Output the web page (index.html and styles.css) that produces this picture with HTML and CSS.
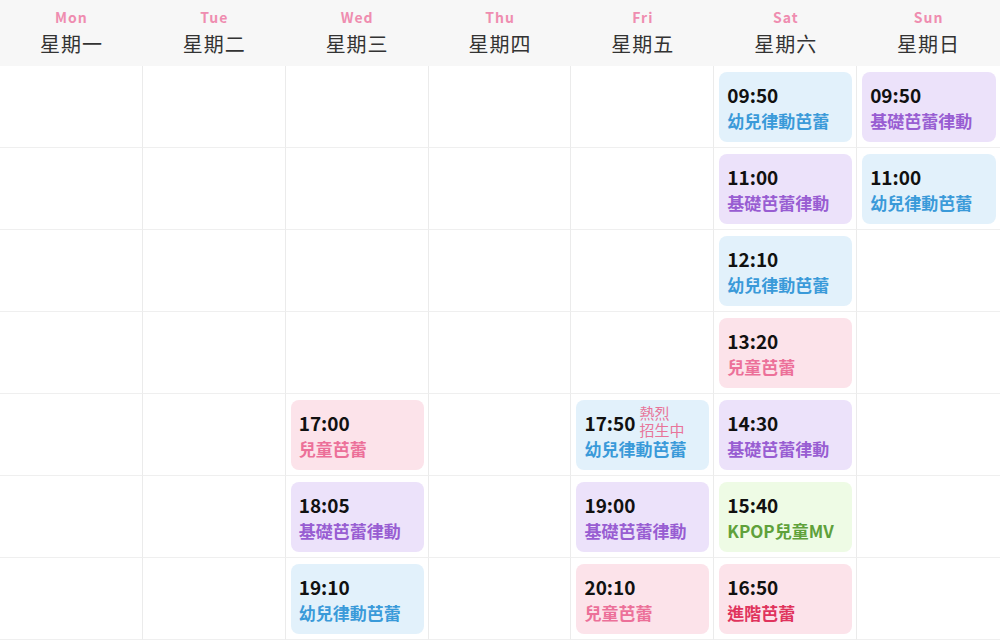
FILE: index.html
```html
<!DOCTYPE html>
<html>
<head>
    <title>課程表</title>
    <link rel="stylesheet" href="styles.css">
</head>
<body>
    <div class="timetable">
        <div class="week-head">
            <div class="day"><span class="day-en">Mon</span><span class="day-zh">星期一</span></div>
            <div class="day"><span class="day-en">Tue</span><span class="day-zh">星期二</span></div>
            <div class="day"><span class="day-en">Wed</span><span class="day-zh">星期三</span></div>
            <div class="day"><span class="day-en">Thu</span><span class="day-zh">星期四</span></div>
            <div class="day"><span class="day-en">Fri</span><span class="day-zh">星期五</span></div>
            <div class="day"><span class="day-en">Sat</span><span class="day-zh">星期六</span></div>
            <div class="day"><span class="day-en">Sun</span><span class="day-zh">星期日</span></div>
        </div>

        <div class="grid">
            <!-- row 1 -->
            <div class="cell"></div>
            <div class="cell"></div>
            <div class="cell"></div>
            <div class="cell"></div>
            <div class="cell"></div>
            <div class="cell"><div class="lesson blue"><div class="time">09:50</div><div class="name">幼兒律動芭蕾</div></div></div>
            <div class="cell"><div class="lesson purple"><div class="time">09:50</div><div class="name">基礎芭蕾律動</div></div></div>

            <!-- row 2 -->
            <div class="cell"></div>
            <div class="cell"></div>
            <div class="cell"></div>
            <div class="cell"></div>
            <div class="cell"></div>
            <div class="cell"><div class="lesson purple"><div class="time">11:00</div><div class="name">基礎芭蕾律動</div></div></div>
            <div class="cell"><div class="lesson blue"><div class="time">11:00</div><div class="name">幼兒律動芭蕾</div></div></div>

            <!-- row 3 -->
            <div class="cell"></div>
            <div class="cell"></div>
            <div class="cell"></div>
            <div class="cell"></div>
            <div class="cell"></div>
            <div class="cell"><div class="lesson blue"><div class="time">12:10</div><div class="name">幼兒律動芭蕾</div></div></div>
            <div class="cell"></div>

            <!-- row 4 -->
            <div class="cell"></div>
            <div class="cell"></div>
            <div class="cell"></div>
            <div class="cell"></div>
            <div class="cell"></div>
            <div class="cell"><div class="lesson pink"><div class="time">13:20</div><div class="name">兒童芭蕾</div></div></div>
            <div class="cell"></div>

            <!-- row 5 -->
            <div class="cell"></div>
            <div class="cell"></div>
            <div class="cell"><div class="lesson pink"><div class="time">17:00</div><div class="name">兒童芭蕾</div></div></div>
            <div class="cell"></div>
            <div class="cell"><div class="lesson blue"><div class="time">17:50<span class="hot"><span class="hot-line">熱烈</span><span class="hot-line">招生中</span></span></div><div class="name">幼兒律動芭蕾</div></div></div>
            <div class="cell"><div class="lesson purple"><div class="time">14:30</div><div class="name">基礎芭蕾律動</div></div></div>
            <div class="cell"></div>

            <!-- row 6 -->
            <div class="cell"></div>
            <div class="cell"></div>
            <div class="cell"><div class="lesson purple"><div class="time">18:05</div><div class="name">基礎芭蕾律動</div></div></div>
            <div class="cell"></div>
            <div class="cell"><div class="lesson purple"><div class="time">19:00</div><div class="name">基礎芭蕾律動</div></div></div>
            <div class="cell"><div class="lesson green"><div class="time">15:40</div><div class="name">KPOP兒童MV</div></div></div>
            <div class="cell"></div>

            <!-- row 7 -->
            <div class="cell"></div>
            <div class="cell"></div>
            <div class="cell"><div class="lesson blue"><div class="time">19:10</div><div class="name">幼兒律動芭蕾</div></div></div>
            <div class="cell"></div>
            <div class="cell"><div class="lesson pink"><div class="time">20:10</div><div class="name">兒童芭蕾</div></div></div>
            <div class="cell"><div class="lesson red"><div class="time">16:50</div><div class="name">進階芭蕾</div></div></div>
            <div class="cell"></div>
        </div>
    </div>
</body>
</html>
```

FILE: styles.css
```css
body {
    margin: 0;
    font-family: "Noto Sans CJK TC", "Noto Sans", sans-serif;
    background-color: #fff;
    color: #222;
}

.timetable {
    width: 1000px;
    height: 640px;
    overflow: hidden;
}

.week-head {
    display: grid;
    grid-template-columns: repeat(7, 1fr);
    height: 66px;
    background-color: #f7f7f7;
}

.day {
    display: flex;
    flex-direction: column;
    align-items: center;
    padding-top: 7px;
}

.day-en {
    font-size: 14px;
    font-weight: 700;
    line-height: 20px;
    letter-spacing: 1px;
    color: #ef8db0;
}

.day-zh {
    font-size: 20px;
    line-height: 33px;
    letter-spacing: 1px;
    color: #333;
}

.grid {
    display: grid;
    grid-template-columns: repeat(7, 1fr);
    grid-auto-rows: 82px;
}

.cell {
    padding: 6px 4px 5px 5px;
    border-right: 1px solid #ebebeb;
    border-bottom: 1px solid #efefef;
}

.cell:nth-child(7n) {
    border-right: none;
}

.lesson {
    height: 70px;
    box-sizing: border-box;
    padding: 9px 8px 0;
    border-radius: 8px;
}

.time {
    display: flex;
    align-items: center;
    height: 27px;
    font-size: 19px;
    font-weight: 700;
    color: #111;
}

.hot {
    display: flex;
    flex-direction: column;
    margin-left: 4px;
    margin-top: -3px;
    font-size: 15px;
    font-weight: 400;
    color: #e8759a;
}

.hot-line {
    line-height: 17px;
}

.name {
    font-size: 17px;
    font-weight: 700;
    line-height: 26px;
}

.blue {
    background-color: #e2f1fb;
    color: #3a9ad9;
}

.purple {
    background-color: #ece2fa;
    color: #985dd2;
}

.pink {
    background-color: #fce3ea;
    color: #ec7099;
}

.green {
    background-color: #eefbe5;
    color: #5fa13b;
}

.red {
    background-color: #fce3ea;
    color: #e0345d;
}
```
